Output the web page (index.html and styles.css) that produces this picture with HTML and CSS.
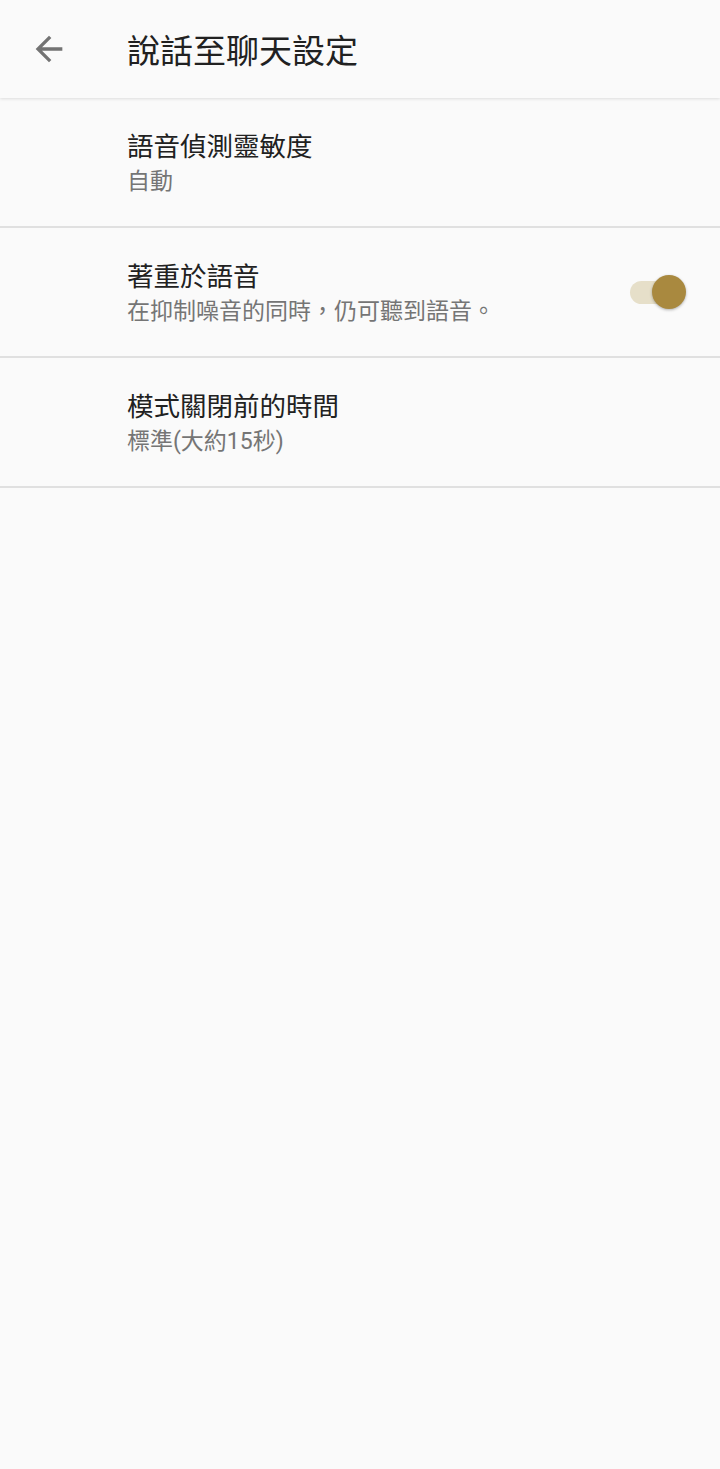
FILE: index.html
```html
<!DOCTYPE html>
<html lang="zh-Hant">
<head>
<meta charset="utf-8">
<link rel="stylesheet" href="styles.css">
</head>
<body>
<header class="appbar">
  <div class="back">
    <svg width="40" height="40" viewBox="0 0 24 24"><path d="M20 11H7.83l5.59-5.59L12 4l-8 8 8 8 1.41-1.41L7.83 13H20v-2z" fill="#737373"/></svg>
  </div>
  <h1 class="title">說話至聊天設定</h1>
</header>
<main class="list">
  <div class="row">
    <div class="text">
      <div class="primary">語音偵測靈敏度</div>
      <div class="secondary">自動</div>
    </div>
  </div>
  <div class="row">
    <div class="text">
      <div class="primary">著重於語音</div>
      <div class="secondary">在抑制噪音的同時，仍可聽到語音。</div>
    </div>
    <div class="switch"><div class="track"></div><div class="thumb"></div></div>
  </div>
  <div class="row">
    <div class="text">
      <div class="primary">模式關閉前的時間</div>
      <div class="secondary">標準(大約15秒)</div>
    </div>
  </div>
</main>
</body>
</html>
```
FILE: styles.css
```css
html, body { margin: 0; padding: 0; }
body {
  background: #fafafa;
  font-family: Roboto, "Noto Sans CJK TC", sans-serif;
  width: 720px;
  min-height: 1469px;
}
.appbar {
  height: 98px;
  display: flex;
  align-items: center;
  background: #fafafa;
  box-shadow: 0 1px 3px rgba(0,0,0,0.12);
  position: relative;
}
.back {
  width: 127px;
  display: flex;
  justify-content: flex-start;
  padding-left: 29px;
  box-sizing: border-box;
}
.back svg { display: block; }
.title {
  margin: 0;
  font-size: 33px;
  font-weight: 400;
  color: #212121;
  line-height: 1;
  margin-top: 4px;
}
.row {
  height: 128px;
  border-bottom: 2px solid #e0e0e0;
  display: flex;
  align-items: center;
  padding-left: 127px;
  padding-right: 34px;
}
.text { flex: 1; padding-top: 4px; }
.primary {
  font-size: 26.5px;
  color: #212121;
  line-height: 36px;
}
.secondary {
  font-size: 23px;
  color: #757575;
  line-height: 34px;
}
.switch {
  position: relative;
  width: 58px;
  height: 40px;
}
.track {
  position: absolute;
  left: 2px; top: 9px;
  width: 54px; height: 23px;
  border-radius: 12px;
  background: #e6dfc9;
}
.thumb {
  position: absolute;
  right: 0; top: 3px;
  width: 34px; height: 34px;
  border-radius: 50%;
  background: #a9893f;
  box-shadow: 0 1px 3px rgba(0,0,0,0.3);
}
```
